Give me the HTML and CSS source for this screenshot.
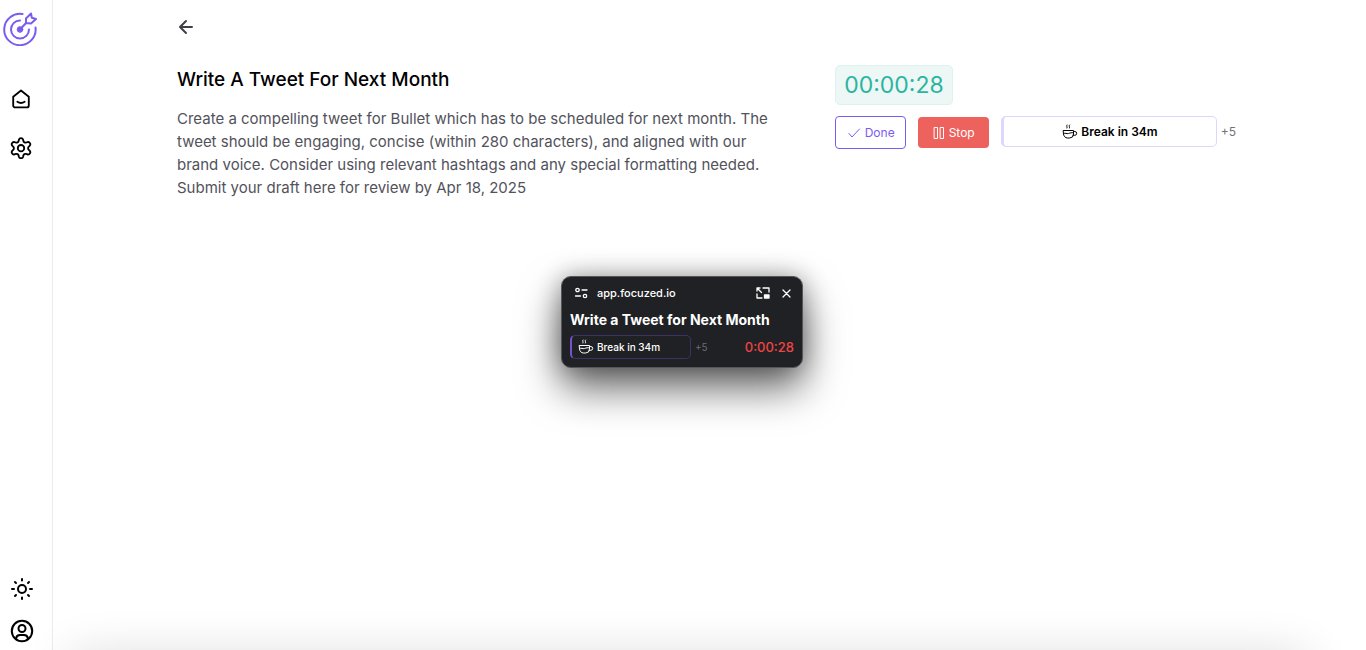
FILE: index.html
```html
<!DOCTYPE html>
<html lang="en">
<head>
    <meta charset="UTF-8">
    <meta name="viewport" content="width=device-width, initial-scale=1.0">
    <title>Focuzed - Write A Tweet For Next Month</title>
    <link rel="stylesheet" href="styles.css">
</head>
<body>
    <svg class="symbols" aria-hidden="true">
        <symbol id="cup" viewBox="0 0 16 16">
            <path d="M1.500 6.500h10v3.500a4 4 0 0 1-4 4H5.500a4 4 0 0 1-4-4z M11.500 7.500h1.300a1.600 1.600 0 0 1 0 3.800h-1.600 M1.500 9.500c2-1 3 .6 5 0s3-1 5-.8 M5 1c-1 1 .6 1.800 0 3 M7.500 1c-1 1 .6 1.800 0 3"/>
        </symbol>
    </svg>

    <aside class="sidebar">
        <a class="logo" href="#" aria-label="Focuzed">
            <svg width="34" height="34" viewBox="0 0 34 34">
                <g fill="none" stroke="currentColor" stroke-width="2" stroke-linecap="round" stroke-linejoin="round">
                    <path d="M19.500 2A15.700 15.700 0 1 0 32.500 15.500"/>
                    <path d="M17 8.500A9 9 0 1 0 26 17.500"/>
                    <path d="M17 17.500l6-6.500 M23 11V6.500l5-5 .8 4.200 4.200 1.300-5 4.500z"/>
                </g>
                <circle cx="17" cy="17.500" r="2.800" fill="currentColor"/>
            </svg>
        </a>
        <nav class="menu">
            <a href="#" aria-label="Home">
                <svg class="icon" width="22" height="22" viewBox="0 0 24 24">
                    <path d="M3.500 9.500L12 2.800l8.500 6.700V19a2.200 2.200 0 0 1-2.200 2.200H5.700A2.200 2.200 0 0 1 3.500 19z M8 15c2.300 1.500 5.700 1.500 8 0"/>
                </svg>
            </a>
            <a href="#" aria-label="Settings">
                <svg class="icon" width="22" height="22" viewBox="0 0 24 24">
                    <path d="M9.700 3a2.400 2.400 0 0 1 4.600 0l.3 1.300a2.400 2.400 0 0 0 3.200 1.700l1.200-.4a2.400 2.400 0 0 1 2.400 4l-.9.900a2.400 2.400 0 0 0 0 3.500l.9.900a2.400 2.400 0 0 1-2.400 4l-1.200-.4a2.400 2.400 0 0 0-3.200 1.700l-.3 1.300a2.400 2.400 0 0 1-4.600 0l-.3-1.300a2.400 2.400 0 0 0-3.200-1.700l-1.200.4a2.400 2.400 0 0 1-2.400-4l.9-.9a2.400 2.400 0 0 0 0-3.500l-.9-.9a2.400 2.400 0 0 1 2.400-4l1.200.4a2.400 2.400 0 0 0 3.200-1.700z"/>
                    <circle cx="12" cy="12.200" r="3.500"/>
                </svg>
            </a>
        </nav>
        <div class="sidebar-bottom">
            <button type="button" aria-label="Toggle theme">
                <svg class="icon" width="24" height="24" viewBox="0 0 24 24">
                    <circle cx="12" cy="12" r="4"/>
                    <path d="M12 2v1.500M12 20.500V22M2 12h2M20 12h2M5 5l1 1M18 18l1 1M5 19l1-1M18 6l1-1"/>
                </svg>
            </button>
            <button type="button" aria-label="Account">
                <svg class="icon" width="24" height="24" viewBox="0 0 24 24">
                    <circle cx="12" cy="12" r="10.200"/>
                    <circle cx="12" cy="9.500" r="3.500"/>
                    <path d="M6 19.500c.5-3 2-3.500 4-3.500h4c2 0 3.500.5 4 3.500"/>
                </svg>
            </button>
        </div>
    </aside>

    <main class="main">
        <div class="container">
            <a class="back" href="#" aria-label="Back">
                <svg width="18" height="18" viewBox="0 0 18 18">
                    <path d="M15 9H3M9 3L3 9l6 6"/>
                </svg>
            </a>
            <div class="task">
                <section class="task-info">
                    <h1>Write A Tweet For Next Month</h1>
                    <p>Create a compelling tweet for Bullet which has to be scheduled for next month. The tweet should be engaging, concise (within 280 characters), and aligned with our brand voice. Consider using relevant hashtags and any special formatting needed. Submit your draft here for review by Apr 18, 2025</p>
                </section>
                <section class="task-timer">
                    <div class="timer">00:00:28</div>
                    <div class="actions">
                        <button type="button" class="btn btn-done">
                            <svg width="14" height="14" viewBox="0 0 14 14"><path d="M2 7.500l3 3.500 7.500-8"/></svg>
                            Done
                        </button>
                        <button type="button" class="btn btn-stop">
                            <svg width="12" height="14" viewBox="0 0 12 14"><path d="M1.500 1.500h3v11h-3zM7.500 1.500h3v11h-3z"/></svg>
                            Stop
                        </button>
                        <div class="break">
                            <div class="break-bar">
                                <svg class="cup" width="16" height="16"><use href="#cup"/></svg>
                                Break in 34m
                            </div>
                            <button type="button" class="extend">+5</button>
                        </div>
                    </div>
                </section>
            </div>
        </div>
    </main>

    <!-- Floating picture-in-picture timer -->
    <div class="pip">
        <div class="pip-header">
            <svg width="14" height="14" viewBox="0 0 14 14">
                <circle cx="3.500" cy="4" r="1.700"/>
                <circle cx="11" cy="10" r="1.700"/>
                <path d="M8 4h5M1.500 10h5"/>
            </svg>
            <span class="pip-host">app.focuzed.io</span>
            <button type="button" aria-label="Back to tab">
                <svg width="14" height="12" viewBox="0 0 14 12">
                    <path d="M7 1h6v4M1 7v4h5M1 4V1h3M1.500 1.500l4 4"/>
                    <path class="fill" d="M8.500 8H13v3H8.500z"/>
                </svg>
            </button>
            <button type="button" aria-label="Close">
                <svg width="9" height="9" viewBox="0 0 9 9"><path d="M1 1l7 7M8 1L1 8"/></svg>
            </button>
        </div>
        <h2>Write a Tweet for Next Month</h2>
        <div class="pip-row">
            <div class="pip-break">
                <svg class="cup" width="16" height="16"><use href="#cup"/></svg>
                Break in 34m
            </div>
            <button type="button" class="pip-extend">+5</button>
            <span class="pip-time">0:00:28</span>
        </div>
    </div>
    <div class="bottom-shade"></div>
</body>
</html>
```
FILE: styles.css
```css
* {
    box-sizing: border-box;
}

body {
    display: flex;
    min-height: 100vh;
    margin: 0;
    font-family: Inter, "Liberation Sans", sans-serif;
    color: #000;
    background-color: #fff;
    overflow: hidden;
}

h1, h2, p {
    margin: 0;
}

button {
    padding: 0;
    border: none;
    background: none;
    color: inherit;
    font-family: inherit;
    cursor: pointer;
}

svg {
    display: block;
    flex: none;
    fill: none;
    stroke: currentColor;
    stroke-linecap: round;
    stroke-linejoin: round;
}

.symbols {
    position: absolute;
    width: 0;
    height: 0;
}

/* Sidebar */
.sidebar {
    display: flex;
    flex-direction: column;
    width: 53px;
    padding: 12px 0 7px 3px;
    border-right: 1px solid #ececee;
}

.logo {
    color: #7c5cf0;
}

.menu {
    display: flex;
    flex-direction: column;
    gap: 27px;
    margin-top: 42px;
    padding-left: 7px;
}

.menu a {
    color: #000;
}

.icon {
    stroke-width: 2;
}

.sidebar-bottom {
    display: flex;
    flex-direction: column;
    gap: 18px;
    margin-top: auto;
    padding-left: 7px;
}

.sidebar-bottom button {
    width: 24px;
}

/* Task page */
.main {
    flex: 1;
    padding: 18px 24px;
}

.container {
    max-width: 1065px;
    margin: 0 auto;
}

.back {
    display: inline-block;
    color: #3f3f46;
}

.back svg {
    stroke-width: 2;
}

.task {
    display: grid;
    grid-template-columns: 3fr 2fr;
    gap: 48px;
    margin-top: 25px;
}

.task-info h1 {
    font-size: 19px;
    font-weight: 500;
    line-height: 30px;
}

.task-info p {
    margin-top: 12px;
    color: #52525b;
    font-size: 15px;
    line-height: 23px;
}

.timer {
    width: fit-content;
    padding: 0 8px;
    border: 1px solid #dcf3ee;
    border-radius: 5px;
    background-color: #edf7f6;
    color: #2bb5a0;
    font-size: 23px;
    line-height: 38px;
}

.actions {
    display: flex;
    align-items: center;
    gap: 12px;
    margin-top: 11px;
}

.btn {
    display: flex;
    align-items: center;
    justify-content: center;
    gap: 4px;
    width: 71px;
    height: 33px;
    border-radius: 4px;
    font-size: 12px;
}

.btn-done {
    border: 1px solid #7c5cf0;
    color: #7c5cf0;
}

.btn-stop {
    height: 31px;
    background-color: #ed625d;
    color: #fff;
}

.break {
    display: flex;
    align-items: center;
    align-self: flex-start;
    gap: 4px;
    flex: 1;
    padding-right: 6px;
}

.break-bar {
    display: flex;
    align-items: center;
    justify-content: center;
    gap: 3px;
    flex: 1;
    height: 31px;
    border: 1px solid #ddd6fe;
    border-left-width: 3px;
    border-radius: 5px;
    font-size: 12px;
    font-weight: 600;
}

.extend {
    color: #71717a;
    font-size: 12px;
}

/* Picture-in-picture window */
.pip {
    position: absolute;
    top: 276px;
    left: 561px;
    width: 242px;
    padding: 9px 8px 8px;
    border: 1px solid #55565a;
    border-radius: 10px;
    background-color: #202124;
    color: #fff;
    box-shadow: 0 20px 40px rgba(0, 0, 0, 0.6), 0 0 24px rgba(0, 0, 0, 0.3);
}

.pip-header {
    display: flex;
    align-items: center;
    padding: 0 3px 0 4px;
    color: #fff;
}

.pip-header svg {
    stroke-width: 1.3;
}

.pip-host {
    flex: 1;
    margin-left: 9px;
    font-size: 11px;
    font-weight: 500;
    line-height: 14px;
}

.pip-header button + button {
    margin-left: 12px;
}

.pip .fill {
    fill: currentColor;
}

.pip h2 {
    margin-top: 10px;
    font-size: 14px;
    font-weight: 700;
    line-height: 20px;
    white-space: nowrap;
}

.pip-row {
    display: flex;
    align-items: center;
    margin-top: 5px;
}

.pip-break {
    display: flex;
    align-items: center;
    gap: 3px;
    width: 121px;
    height: 24px;
    padding-left: 6px;
    border: 1px solid #3d3266;
    border-left: 2px solid #7454c8;
    border-radius: 5px;
    font-size: 10px;
    font-weight: 500;
}

.pip-extend {
    margin-left: 4px;
    color: #6b6b73;
    font-size: 10px;
}

.pip-time {
    margin-left: auto;
    color: #ef4444;
    font-size: 13px;
    font-weight: 500;
}

/* Soft shade along the bottom edge */
.bottom-shade {
    position: fixed;
    right: 70px;
    bottom: -30px;
    left: 80px;
    height: 10px;
    box-shadow: 0 0 50px 10px rgba(0, 0, 0, 0.2);
    pointer-events: none;
}
```
